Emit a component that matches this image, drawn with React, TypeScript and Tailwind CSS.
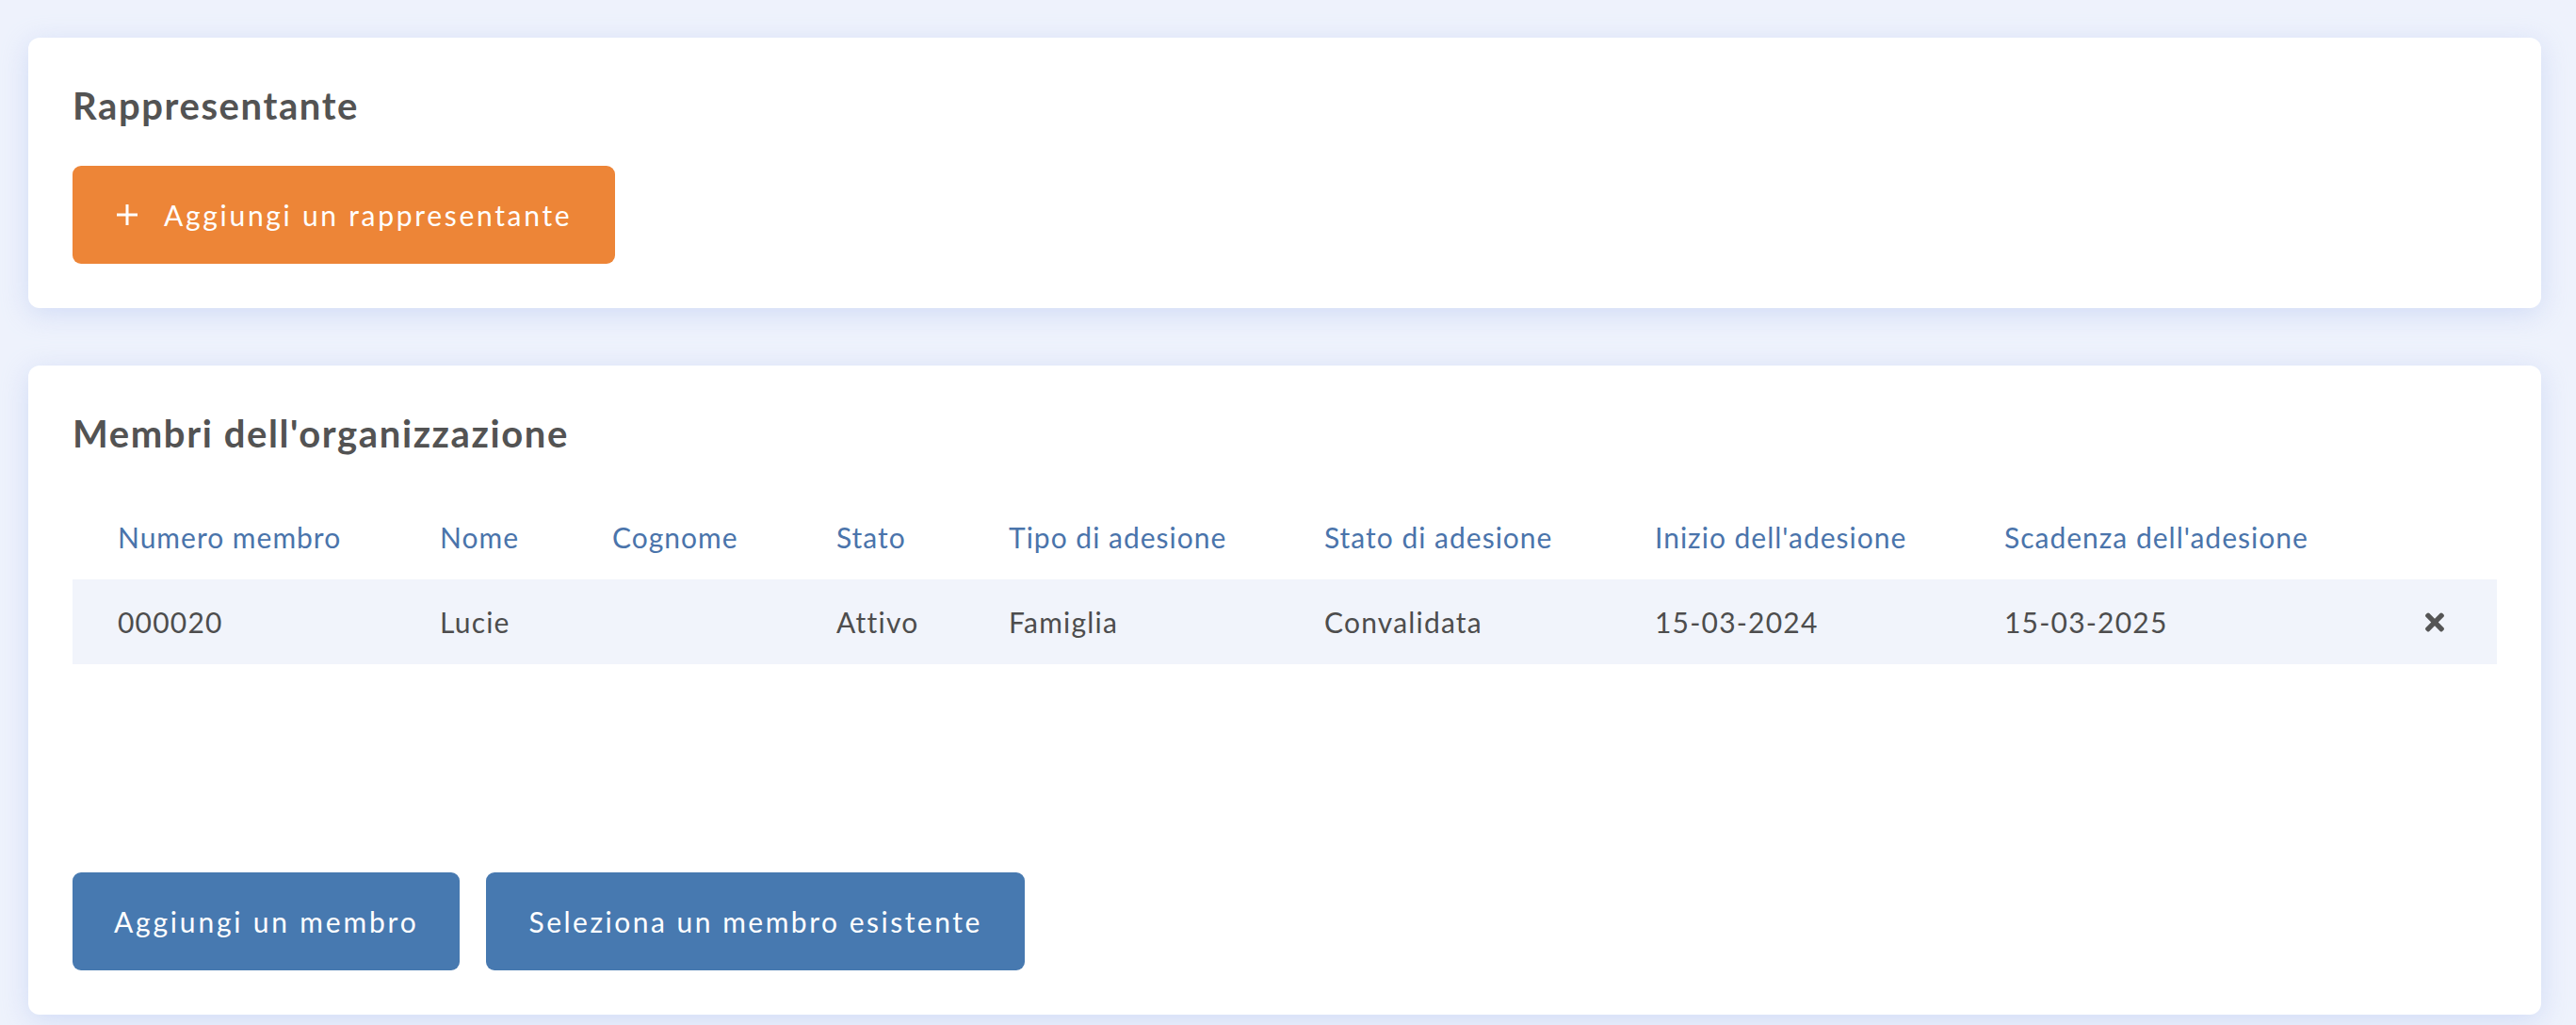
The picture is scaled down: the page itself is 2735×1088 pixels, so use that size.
import React from 'react';
import { FaTimes } from 'react-icons/fa';

const columns = [
  { label: 'Numero membro', w: 'w-[342px]' },
  { label: 'Nome', w: 'w-[183px]' },
  { label: 'Cognome', w: 'w-[238px]' },
  { label: 'Stato', w: 'w-[183px]' },
  { label: 'Tipo di adesione', w: 'w-[335px]' },
  { label: 'Stato di adesione', w: 'w-[351px]' },
  { label: "Inizio dell'adesione", w: 'w-[371px]' },
  { label: "Scadenza dell'adesione", w: 'w-[447px]' },
];

const members = [
  {
    id: '000020',
    firstName: 'Lucie',
    lastName: '',
    status: 'Attivo',
    type: 'Famiglia',
    state: 'Convalidata',
    start: '15-03-2024',
    end: '15-03-2025',
  },
];

const Card: React.FC<{ title: string; children: React.ReactNode }> = ({ title, children }) => (
  <section className="bg-white rounded-[12px] shadow-[0_6px_28px_rgba(176,192,240,0.45)] px-[47px] pt-[48px] pb-[47px]">
    <h2 className="text-[40px] leading-[48px] font-bold tracking-[1.6px] text-[#535353]">{title}</h2>
    {children}
  </section>
);

export default function App() {
  return (
    <div
      className="min-h-screen bg-[#eef2fc] pl-[30px] pr-[37px] pt-[40px] pb-[40px] flex flex-col gap-[61px]"
      style={{ fontFamily: 'Lato, "Noto Sans", sans-serif' }}
    >
      <Card title="Rappresentante">
        <button className="mt-[40px] h-[104px] flex items-center gap-[27px] pl-[46px] pr-[46px] rounded-[9px] bg-[#ed8537] text-white text-[30px] tracking-[2.7px]">
          <svg width="24" height="24" viewBox="0 0 24 24" className="shrink-0">
            <path d="M12 1v22M1 12h22" stroke="white" strokeWidth="3" fill="none" />
          </svg>
          <span>Aggiungi un rappresentante</span>
        </button>
      </Card>

      <Card title="Membri dell'organizzazione">
        <table className="mt-[42px] w-full table-fixed border-collapse">
          <thead>
            <tr className="h-[89px]">
              {columns.map((c) => (
                <th
                  key={c.label}
                  className={`${c.w} pl-[48px] text-left font-normal text-[30px] tracking-[1px] text-[#4a74ab] whitespace-nowrap`}
                >
                  {c.label}
                </th>
              ))}
              <th className="w-[124px]" />
            </tr>
          </thead>
          <tbody>
            {members.map((m) => (
              <tr key={m.id} className="h-[90px] bg-[#f1f4fb] text-[30px] tracking-[1.2px] text-[#4d4d4d]">
                <td className="pl-[48px]">{m.id}</td>
                <td className="pl-[48px]">{m.firstName}</td>
                <td className="pl-[48px]">{m.lastName}</td>
                <td className="pl-[48px]">{m.status}</td>
                <td className="pl-[48px]">{m.type}</td>
                <td className="pl-[48px]">{m.state}</td>
                <td className="pl-[48px]">{m.start}</td>
                <td className="pl-[48px]">{m.end}</td>
                <td className="pl-[48px]">
                  <FaTimes className="text-[#555] w-[20px] h-[29px]" />
                </td>
              </tr>
            ))}
          </tbody>
        </table>

        <div className="mt-[221px] flex gap-[28px]">
          <button className="h-[104px] px-[44px] rounded-[9px] bg-[#4779b0] text-white text-[30px] tracking-[2.8px]">
            Aggiungi un membro
          </button>
          <button className="h-[104px] px-[45px] rounded-[9px] bg-[#4779b0] text-white text-[30px] tracking-[2.5px]">
            Seleziona un membro esistente
          </button>
        </div>
      </Card>
    </div>
  );
}
